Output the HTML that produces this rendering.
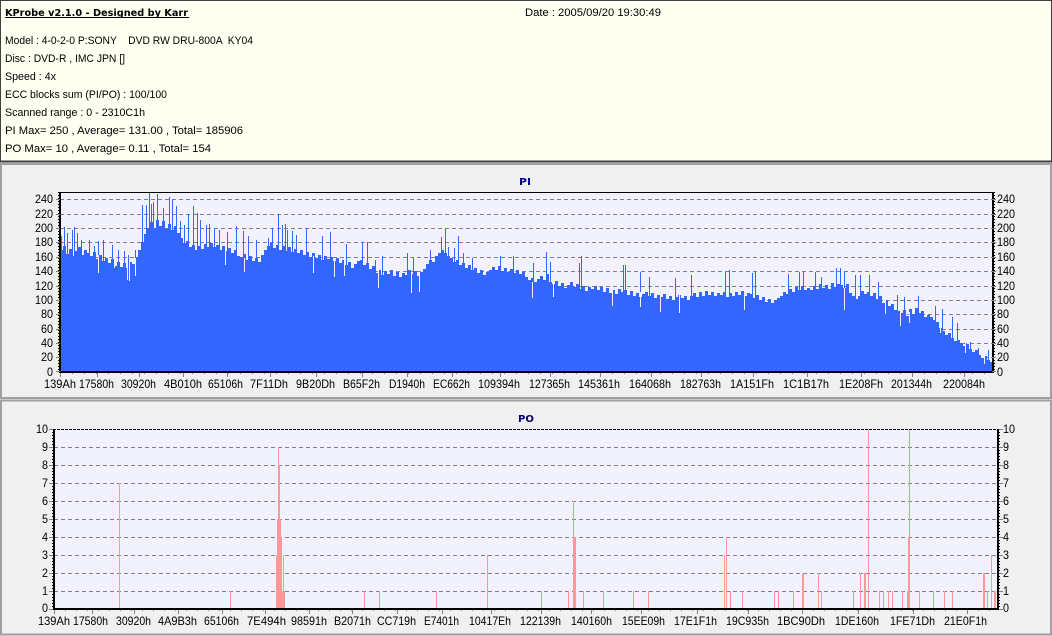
<!DOCTYPE html>
<html>
<head>
<meta charset="utf-8">
<style>
html,body{margin:0;padding:0;background:#f0f0f0;width:1052px;height:636px;overflow:hidden}
svg{display:block}
text{font-family:"Liberation Sans",sans-serif;font-size:12px;fill:#000}
.t{font-size:11px}
.b{font-family:"DejaVu Sans",sans-serif;font-weight:bold;font-size:10px}
.n{fill:#000080}
</style>
</head>
<body>
<svg width="1052" height="636" viewBox="0 0 1052 636" xmlns="http://www.w3.org/2000/svg">
<rect width="1052" height="636" fill="#f0f0f0"/>
<!-- info panel -->
<rect x="0.5" y="0.5" width="1051" height="161" fill="#fffff2" stroke="#404040"/>
<line x1="0" y1="161.5" x2="1052" y2="161.5" stroke="#404040" stroke-width="2"/>
<text class="b" x="5" y="16" textLength="183" lengthAdjust="spacingAndGlyphs">KProbe v2.1.0 - Designed by Karr</text>
<rect x="5" y="17" width="184" height="1" fill="#000"/>
<text class="t" x="525" y="16" textLength="136" lengthAdjust="spacingAndGlyphs">Date : 2005/09/20 19:30:49</text>
<text class="t" x="5" y="44" textLength="248" lengthAdjust="spacingAndGlyphs" xml:space="preserve">Model : 4-0-2-0 P:SONY    DVD RW DRU-800A  KY04</text>
<text class="t" x="5" y="62" textLength="120" lengthAdjust="spacingAndGlyphs">Disc : DVD-R , IMC JPN []</text>
<text class="t" x="5" y="80" textLength="51" lengthAdjust="spacingAndGlyphs">Speed : 4x</text>
<text class="t" x="5" y="98" textLength="162" lengthAdjust="spacingAndGlyphs">ECC blocks sum (PI/PO) : 100/100</text>
<text class="t" x="5" y="116" textLength="140" lengthAdjust="spacingAndGlyphs">Scanned range : 0 - 2310C1h</text>
<text class="t" x="5" y="134" textLength="238" lengthAdjust="spacingAndGlyphs">PI Max= 250 , Average= 131.00 , Total= 185906</text>
<text class="t" x="5" y="152" textLength="206" lengthAdjust="spacingAndGlyphs">PO Max= 10 , Average= 0.11 , Total= 154</text>

<!-- panel frames -->
<rect x="1" y="164" width="1050" height="234" fill="#f0f0f0" stroke="#a0a0a0" stroke-width="2"/>
<rect x="1" y="400.5" width="1050" height="234" fill="#f0f0f0" stroke="#a0a0a0" stroke-width="2"/>

<!-- PI chart -->
<text class="b n" x="519" y="185" textLength="12" lengthAdjust="spacingAndGlyphs">PI</text>
<rect x="60" y="192" width="932" height="180" fill="#f2f2ff"/>
<path stroke="#808080" stroke-dasharray="4 3" stroke-width="1" fill="none" d="M60 199.5H992M60 214.5H992M60 228.5H992M60 242.5H992M60 257.5H992M60 271.5H992M60 286.5H992M60 300.5H992M60 314.5H992M60 329.5H992M60 343.5H992M60 357.5H992"/>
<path fill="#3366ff" d="M60 372V250h3V246h3V254h3V249h3V256h3V251h3V247h3V255h3V250h3V253h3
V256h3V252h3V259h3V255h3V261h3V258h3V263h3V259h3V266h3V262h3
V267h3V263h3V268h3V262h3V264h3V257h3V250h3V242h3V234h3V228h3
V222h3V228h3V220h3V226h3V221h3V229h3V224h3V230h3V226h3V233h3
V238h3V243h3V241h3V247h3V245h3V250h3V246h3V249h3V244h3V247h3
V243h3V247h3V245h3V250h3V246h3V251h3V248h3V253h3V250h3V256h3
V257h3V254h3V260h3V256h3V261h3V258h3V262h3V255h3V250h3V246h3
V243h3V248h3V245h3V250h3V246h3V251h3V247h3V252h3V249h3V253h3
V250h3V255h3V252h3V257h3V253h3V258h3V255h3V260h3V256h3V259h3
V257h3V261h3V258h3V263h3V260h3V265h3V262h3V268h3V264h3V261h3
V260h3V265h3V263h3V269h3V266h3V273h3V270h3V275h3V271h3V274h3
V270h3V276h3V272h3V277h3V273h3V275h3V270h3V274h3V271h3V276h3
V272h3V269h3V264h3V260h3V262h3V256h3V253h3V250h3V253h3V256h3
V258h3V262h3V260h3V265h3V263h3V268h3V265h3V270h3V268h3V273h3
V270h3V275h3V272h3V270h3V267h3V270h3V266h3V271h3V268h3V272h3
V269h3V273h3V270h3V274h3V272h3V277h3V280h3V278h3V282h3V279h3
V276h3V280h3V274h3V282h3V284h3V281h3V286h3V283h3V288h3V285h3
V282h3V287h3V284h3V289h3V286h3V291h3V287h3V289h3V286h3V290h3
V287h3V292h3V288h3V293h3V290h3V294h3V289h3V292h3V290h3V295h3
V291h3V296h3V293h3V297h3V294h3V292h3V296h3V293h3V298h3V295h3
V297h3V294h3V299h3V296h3V300h3V297h3V295h3V298h3V296h3V300h3
V296h3V293h3V297h3V292h3V296h3V291h3V295h3V292h3V296h3V293h3
V295h3V292h3V297h3V293h3V296h3V292h3V295h3V291h3V296h3V293h3
V294h3V298h3V295h3V300h3V297h3V302h3V299h3V303h3V300h3V298h3
V296h3V292h3V294h3V289h3V292h3V287h3V290h3V286h3V290h3V288h3
V290h3V286h3V289h3V284h3V288h3V285h3V289h3V283h3V287h3V284h3
V285h3V288h3V284h3V293h3V296h3V299h3V296h3V291h3V294h3V292h3
V296h3V293h3V299h3V296h3V303h3V300h3V306h3V304h3V310h3V311h3
V313h3V310h3V316h3V309h3V314h3V308h3V313h3V311h3V317h3V315h3
V317h3V320h3V322h3V328h3V331h3V335h3V333h3V338h3V341h3V340h3
V343h3V346h3V344h3V349h3V352h3V350h3V355h3V358h3V356h3V360h3
V362h2V372z"/>
<path stroke="#3366ff" stroke-width="1" fill="none" d="M61.5 372V236M64.5 372V227M67.5 372V233M72.5 372V230M74.5 372V227M77.5 372V233M81.5 372V240M89.5 372V240M94.5 372V246M98.5 372V241M103.5 372V240M112.5 372V245M118.5 372V250M124.5 372V251M128.5 372V255M135.5 372V250M142.5 372V205M146.5 372V205M149.5 372V192M151.5 372V204M153.5 372V202M157.5 372V194M163.5 372V208M169.5 372V197M172.5 372V200M176.5 372V206M180.5 372V221M184.5 372V225M188.5 372V214M193.5 372V206M197.5 372V213M200.5 372V220M206.5 372V225M209.5 372V224M214.5 372V228M219.5 372V230M227.5 372V232M236.5 372V226M243.5 372V231M248.5 372V236M256.5 372V240M268.5 372V238M272.5 372V228M278.5 372V214M282.5 372V225M285.5 372V224M287.5 372V230M292.5 372V231M296.5 372V235M306.5 372V228M322.5 372V236M330.5 372V232M346.5 372V244M362.5 372V242M367.5 372V242M375.5 372V260M382.5 372V256M407.5 372V253M413.5 372V258M430.5 372V250M441.5 372V237M445.5 372V228M448.5 372V247M454.5 372V248M458.5 372V236M463.5 372V253M472.5 372V258M500.5 372V256M513.5 372V256M533.5 372V263M546.5 372V252M550.5 372V262M579.5 372V263M581.5 372V256M623.5 372V265M625.5 372V265M640.5 372V272M649.5 372V277M675.5 372V278M691.5 372V275M725.5 372V272M729.5 372V270M752.5 372V273M755.5 372V272M788.5 372V274M799.5 372V272M803.5 372V272M815.5 372V272M821.5 372V277M836.5 372V268M840.5 372V268M844.5 372V272M855.5 372V275M860.5 372V275M869.5 372V275M878.5 372V282M897.5 372V295M904.5 372V297M918.5 372V296M935.5 372V306M942.5 372V309M952.5 372V317M957.5 372V323M970.5 372V342M978.5 372V348M988.5 372V350"/>
<path stroke="#f2f2ff" stroke-width="1" fill="none" d="M98.5 255V273M114.5 260V268M127.5 262V280M129.5 262V281M135.5 258V276M225.5 250V265M244.5 258V272M313.5 256V273M334.5 260V277M344.5 258V276M378.5 270V288M411.5 272V293M419.5 272V292M532.5 282V298M553.5 282V297M612.5 290V306M640.5 292V307M660.5 296V312M679.5 295V313M744.5 294V310M844.5 288V310M885.5 300V314M900.5 310V326M909.5 312V323M940.5 318V333M965.5 340V353M984.5 356V364"/>
<g fill="#000">
<rect x="59" y="192" width="2" height="181"/>
<rect x="59" y="192" width="935" height="1"/>
<rect x="59" y="371" width="935" height="2"/>
<rect x="992" y="192" width="2" height="181"/>
</g>
<path stroke="#000" stroke-width="1" fill="none" stroke-dasharray="1 2" d="M58.5 192V372M994.5 192V372"/>
<path stroke="#808080" stroke-width="1" fill="none" d="M56 199.5h4M56 214.5h4M56 228.5h4M56 242.5h4M56 257.5h4M56 271.5h4M56 286.5h4M56 300.5h4M56 314.5h4M56 329.5h4M56 343.5h4M56 357.5h4M56 371.5h4M992 199.5h4M992 214.5h4M992 228.5h4M992 242.5h4M992 257.5h4M992 271.5h4M992 286.5h4M992 300.5h4M992 314.5h4M992 329.5h4M992 343.5h4M992 357.5h4M992 371.5h4"/>
<path stroke="#808080" stroke-width="1" fill="none" d="M60.5 373v4M97.5 373v4M139.5 373v4M183.5 373v4M227.5 373v4M270.5 373v4M316.5 373v4M362.5 373v4M407.5 373v4M452.5 373v4M500.5 373v4M550.5 373v4M600.5 373v4M651.5 373v4M701.5 373v4M753.5 373v4M807.5 373v4M861.5 373v4M912.5 373v4M964.5 373v4"/>
<path stroke="#808080" stroke-width="1" fill="none" stroke-dasharray="1 11" d="M60 373.5H992"/>
<g text-anchor="end" lengthAdjust="spacingAndGlyphs">
<text x="53" y="203" textLength="18" lengthAdjust="spacingAndGlyphs">240</text><text x="53" y="218" textLength="18" lengthAdjust="spacingAndGlyphs">220</text><text x="53" y="232" textLength="18" lengthAdjust="spacingAndGlyphs">200</text><text x="53" y="246" textLength="18" lengthAdjust="spacingAndGlyphs">180</text><text x="53" y="261" textLength="18" lengthAdjust="spacingAndGlyphs">160</text><text x="53" y="275" textLength="18" lengthAdjust="spacingAndGlyphs">140</text><text x="53" y="290" textLength="18" lengthAdjust="spacingAndGlyphs">120</text><text x="53" y="304" textLength="18" lengthAdjust="spacingAndGlyphs">100</text><text x="53" y="318" textLength="12" lengthAdjust="spacingAndGlyphs">80</text><text x="53" y="333" textLength="12" lengthAdjust="spacingAndGlyphs">60</text><text x="53" y="347" textLength="12" lengthAdjust="spacingAndGlyphs">40</text><text x="53" y="361" textLength="12" lengthAdjust="spacingAndGlyphs">20</text><text x="53" y="376" textLength="6" lengthAdjust="spacingAndGlyphs">0</text>
</g>
<g>
<text x="997" y="203" textLength="18" lengthAdjust="spacingAndGlyphs">240</text><text x="997" y="218" textLength="18" lengthAdjust="spacingAndGlyphs">220</text><text x="997" y="232" textLength="18" lengthAdjust="spacingAndGlyphs">200</text><text x="997" y="246" textLength="18" lengthAdjust="spacingAndGlyphs">180</text><text x="997" y="261" textLength="18" lengthAdjust="spacingAndGlyphs">160</text><text x="997" y="275" textLength="18" lengthAdjust="spacingAndGlyphs">140</text><text x="997" y="290" textLength="18" lengthAdjust="spacingAndGlyphs">120</text><text x="997" y="304" textLength="18" lengthAdjust="spacingAndGlyphs">100</text><text x="997" y="318" textLength="12" lengthAdjust="spacingAndGlyphs">80</text><text x="997" y="333" textLength="12" lengthAdjust="spacingAndGlyphs">60</text><text x="997" y="347" textLength="12" lengthAdjust="spacingAndGlyphs">40</text><text x="997" y="361" textLength="12" lengthAdjust="spacingAndGlyphs">20</text><text x="997" y="376" textLength="6" lengthAdjust="spacingAndGlyphs">0</text>
</g>
<g>
<text x="44" y="388" textLength="32" lengthAdjust="spacingAndGlyphs">139Ah</text>
<text x="79" y="388" textLength="35" lengthAdjust="spacingAndGlyphs">17580h</text>
<text x="121" y="388" textLength="35" lengthAdjust="spacingAndGlyphs">30920h</text>
<text x="164" y="388" textLength="38" lengthAdjust="spacingAndGlyphs">4B010h</text>
<text x="208" y="388" textLength="35" lengthAdjust="spacingAndGlyphs">65106h</text>
<text x="250" y="388" textLength="38" lengthAdjust="spacingAndGlyphs">7F11Dh</text>
<text x="296" y="388" textLength="39" lengthAdjust="spacingAndGlyphs">9B20Dh</text>
<text x="343" y="388" textLength="37" lengthAdjust="spacingAndGlyphs">B65F2h</text>
<text x="389" y="388" textLength="36" lengthAdjust="spacingAndGlyphs">D1940h</text>
<text x="433" y="388" textLength="37" lengthAdjust="spacingAndGlyphs">EC662h</text>
<text x="478" y="388" textLength="42" lengthAdjust="spacingAndGlyphs">109394h</text>
<text x="529" y="388" textLength="41" lengthAdjust="spacingAndGlyphs">127365h</text>
<text x="578" y="388" textLength="42" lengthAdjust="spacingAndGlyphs">145361h</text>
<text x="629" y="388" textLength="42" lengthAdjust="spacingAndGlyphs">164068h</text>
<text x="680" y="388" textLength="41" lengthAdjust="spacingAndGlyphs">182763h</text>
<text x="730" y="388" textLength="44" lengthAdjust="spacingAndGlyphs">1A151Fh</text>
<text x="783" y="388" textLength="46" lengthAdjust="spacingAndGlyphs">1C1B17h</text>
<text x="839" y="388" textLength="44" lengthAdjust="spacingAndGlyphs">1E208Fh</text>
<text x="891" y="388" textLength="41" lengthAdjust="spacingAndGlyphs">201344h</text>
<text x="943" y="388" textLength="42" lengthAdjust="spacingAndGlyphs">220084h</text>
</g>

<!-- PO chart -->
<text class="b n" x="518" y="422" textLength="16" lengthAdjust="spacingAndGlyphs">PO</text>
<rect x="54" y="429" width="944" height="180" fill="#f2f2ff"/>
<path stroke="#808080" stroke-width="1" fill="none" stroke-dasharray="4 3" d="M54 447.5H998M54 465.5H998M54 483.5H998M54 501.5H998M54 519.5H998M54 537.5H998M54 555.5H998M54 573.5H998M54 591.5H998"/>
<path stroke="#ff9999" stroke-width="1" fill="none" d="M119.5 609V483M230.5 609V591M276.5 609V555M277.5 609V519M278.5 609V447M279.5 609V465M280.5 609V519M281.5 609V537M282.5 609V591M283.5 609V555M284.5 609V591M364.5 609V591M379.5 609V591M436.5 609V591M487.5 609V555M541.5 609V591M568.5 609V591M573.5 609V501M574.5 609V537M575.5 609V537M583.5 609V591M603.5 609V591M633.5 609V591M648.5 609V591M724.5 609V555M726.5 609V537M730.5 609V591M742.5 609V591M774.5 609V591M778.5 609V591M793.5 609V591M802.5 609V573M803.5 609V573M818.5 609V573M821.5 609V591M853.5 609V591M860.5 609V573M864.5 609V573M865.5 609V573M868.5 609V429M879.5 609V591M883.5 609V591M888.5 609V591M892.5 609V591M902.5 609V591M907.5 609V591M908.5 609V537M909.5 609V429M919.5 609V591M933.5 609V591M944.5 609V591M952.5 609V591M983.5 609V573M984.5 609V573M987.5 609V591M991.5 609V555M994.5 609V591M995.5 609V591M997.5 609V555"/>
<path stroke="#000" stroke-width="1" fill="none" stroke-dasharray="3 1" d="M53 429.5H998"/>
<g fill="#000">
<rect x="53" y="429" width="2" height="181"/>
<rect x="53" y="608" width="946" height="2"/>
<rect x="997" y="429" width="2" height="181"/>
</g>
<path stroke="#000" stroke-width="1" fill="none" stroke-dasharray="1 2" d="M52.5 429V609M999.5 429V609"/>
<path stroke="#808080" stroke-width="1" fill="none" d="M49 429.5h4M49 447.5h4M49 465.5h4M49 483.5h4M49 501.5h4M49 519.5h4M49 537.5h4M49 555.5h4M49 573.5h4M49 591.5h4M49 609.5h4M999 429.5h4M999 447.5h4M999 465.5h4M999 483.5h4M999 501.5h4M999 519.5h4M999 537.5h4M999 555.5h4M999 573.5h4M999 591.5h4M999 609.5h4"/>
<path stroke="#808080" stroke-width="1" fill="none" d="M54.5 610v4M92.5 610v4M134.5 610v4M178.5 610v4M222.5 610v4M265.5 610v4M309.5 610v4M352.5 610v4M397.5 610v4M442.5 610v4M491.5 610v4M541.5 610v4M591.5 610v4M641.5 610v4M697.5 610v4M748.5 610v4M802.5 610v4M858.5 610v4M913.5 610v4M967.5 610v4"/>
<path stroke="#808080" stroke-width="1" fill="none" stroke-dasharray="1 10" d="M54 610.5H998"/>
<g text-anchor="end">
<text x="48" y="433" textLength="12" lengthAdjust="spacingAndGlyphs">10</text><text x="48" y="451" textLength="6" lengthAdjust="spacingAndGlyphs">9</text><text x="48" y="469" textLength="6" lengthAdjust="spacingAndGlyphs">8</text><text x="48" y="487" textLength="6" lengthAdjust="spacingAndGlyphs">7</text><text x="48" y="505" textLength="6" lengthAdjust="spacingAndGlyphs">6</text><text x="48" y="523" textLength="6" lengthAdjust="spacingAndGlyphs">5</text><text x="48" y="541" textLength="6" lengthAdjust="spacingAndGlyphs">4</text><text x="48" y="559" textLength="6" lengthAdjust="spacingAndGlyphs">3</text><text x="48" y="577" textLength="6" lengthAdjust="spacingAndGlyphs">2</text><text x="48" y="595" textLength="6" lengthAdjust="spacingAndGlyphs">1</text><text x="48" y="612" textLength="6" lengthAdjust="spacingAndGlyphs">0</text>
</g>
<g>
<text x="1003" y="433" textLength="12" lengthAdjust="spacingAndGlyphs">10</text><text x="1003" y="451" textLength="6" lengthAdjust="spacingAndGlyphs">9</text><text x="1003" y="469" textLength="6" lengthAdjust="spacingAndGlyphs">8</text><text x="1003" y="487" textLength="6" lengthAdjust="spacingAndGlyphs">7</text><text x="1003" y="505" textLength="6" lengthAdjust="spacingAndGlyphs">6</text><text x="1003" y="523" textLength="6" lengthAdjust="spacingAndGlyphs">5</text><text x="1003" y="541" textLength="6" lengthAdjust="spacingAndGlyphs">4</text><text x="1003" y="559" textLength="6" lengthAdjust="spacingAndGlyphs">3</text><text x="1003" y="577" textLength="6" lengthAdjust="spacingAndGlyphs">2</text><text x="1003" y="595" textLength="6" lengthAdjust="spacingAndGlyphs">1</text><text x="1003" y="612" textLength="6" lengthAdjust="spacingAndGlyphs">0</text>
</g>
<g>
<text x="38" y="625" textLength="32" lengthAdjust="spacingAndGlyphs">139Ah</text>
<text x="73" y="625" textLength="35" lengthAdjust="spacingAndGlyphs">17580h</text>
<text x="116" y="625" textLength="35" lengthAdjust="spacingAndGlyphs">30920h</text>
<text x="158" y="625" textLength="39" lengthAdjust="spacingAndGlyphs">4A9B3h</text>
<text x="204" y="625" textLength="35" lengthAdjust="spacingAndGlyphs">65106h</text>
<text x="247" y="625" textLength="39" lengthAdjust="spacingAndGlyphs">7E494h</text>
<text x="291" y="625" textLength="36" lengthAdjust="spacingAndGlyphs">98591h</text>
<text x="334" y="625" textLength="37" lengthAdjust="spacingAndGlyphs">B2071h</text>
<text x="377" y="625" textLength="39" lengthAdjust="spacingAndGlyphs">CC719h</text>
<text x="424" y="625" textLength="35" lengthAdjust="spacingAndGlyphs">E7401h</text>
<text x="469" y="625" textLength="42" lengthAdjust="spacingAndGlyphs">10417Eh</text>
<text x="520" y="625" textLength="41" lengthAdjust="spacingAndGlyphs">122139h</text>
<text x="571" y="625" textLength="41" lengthAdjust="spacingAndGlyphs">140160h</text>
<text x="622" y="625" textLength="43" lengthAdjust="spacingAndGlyphs">15EE09h</text>
<text x="674" y="625" textLength="43" lengthAdjust="spacingAndGlyphs">17E1F1h</text>
<text x="726" y="625" textLength="43" lengthAdjust="spacingAndGlyphs">19C935h</text>
<text x="777" y="625" textLength="48" lengthAdjust="spacingAndGlyphs">1BC90Dh</text>
<text x="835" y="625" textLength="44" lengthAdjust="spacingAndGlyphs">1DE160h</text>
<text x="890" y="625" textLength="45" lengthAdjust="spacingAndGlyphs">1FE71Dh</text>
<text x="944" y="625" textLength="43" lengthAdjust="spacingAndGlyphs">21E0F1h</text>
</g>
</svg>
</body>
</html>
